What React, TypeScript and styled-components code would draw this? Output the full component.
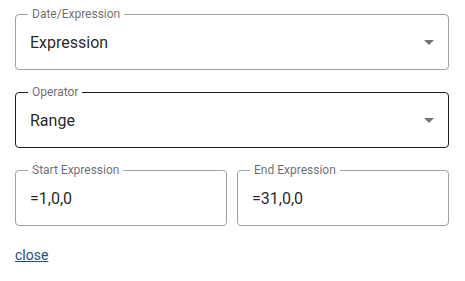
import React from "react";
import styled, { createGlobalStyle, css } from "styled-components";

const GlobalStyle = createGlobalStyle`
    body {
        margin: 0;
        background: #fff;
        font-family: Roboto, "Liberation Sans", Arial, sans-serif;
        color: rgba(0, 0, 0, 0.87);
    }
`

const Panel = styled.div`
    display: flex;
    flex-direction: column;
    row-gap: 22px;
    width: 434px;
    padding: 14px 16px 0 15px;
`

const Field = styled.div<{ active?: boolean }>`
    position: relative;
    display: flex;
    align-items: center;
    flex-shrink: 0;
    box-sizing: border-box;
    height: 56px;
    padding: 0 14px;
    border: 1px solid #a3a3a3;
    border-radius: 4px;
    ${props => props.active && css`
        border-color: #1f1f1f;
    `}
`

const Row = styled.div`
    display: flex;
    flex-direction: row;
    column-gap: 10px;
    ${Field} {
        flex: 1 1 0;
    }
`

const Label = styled.span`
    position: absolute;
    top: -8px;
    left: 12px;
    padding: 0 4px;
    background: #fff;
    font-size: 12px;
    line-height: 14px;
    color: rgba(0, 0, 0, 0.6);
    white-space: nowrap;
`

const Value = styled.span`
    flex: 1;
    font-size: 16px;
    line-height: 23px;
    color: rgba(0, 0, 0, 0.87);
`

const Arrow = styled.svg`
    width: 24px;
    height: 24px;
    margin-right: -7px;
    fill: rgba(0, 0, 0, 0.54);
`

const CloseLink = styled.a`
    width: fit-content;
    margin-top: -3px;
    font-size: 14px;
    line-height: 20px;
    color: #1b4f82;
    text-decoration: underline;
    cursor: pointer;
`

const SelectField = ({ label, value, active }: { label: string; value: string; active?: boolean }) => (
    <Field active={active}>
        <Label>{label}</Label>
        <Value>{value}</Value>
        <Arrow viewBox="0 0 24 24"><path d="M7 10l5 5 5-5z" /></Arrow>
    </Field>
)

const TextField = ({ label, value }: { label: string; value: string }) => (
    <Field>
        <Label>{label}</Label>
        <Value>{value}</Value>
    </Field>
)

const App = () => {
    return (
        <>
            <GlobalStyle />
            <Panel>
                <SelectField label="Date/Expression" value="Expression" />
                <SelectField label="Operator" value="Range" active />
                <Row>
                    <TextField label="Start Expression" value="=1,0,0" />
                    <TextField label="End Expression" value="=31,0,0" />
                </Row>
                <CloseLink>close</CloseLink>
            </Panel>
        </>
    )
}

export default App;
